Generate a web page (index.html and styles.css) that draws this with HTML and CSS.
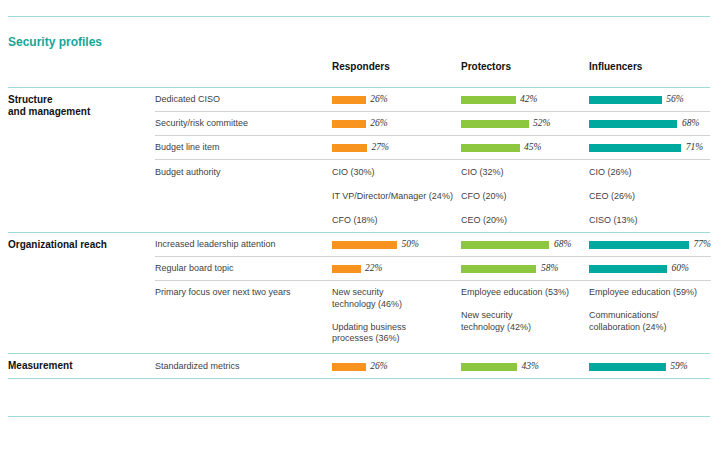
FILE: index.html
```html
<!DOCTYPE html>
<html lang="en">
<head>
<meta charset="utf-8">
<title>Security profiles</title>
<link rel="stylesheet" href="styles.css">
</head>
<body>
<div class="page">
  <div class="rule"></div>
  <h1 class="title">Security profiles</h1>
  <div class="head">
    <div></div>
    <div></div>
    <div>Responders</div>
    <div>Protectors</div>
    <div>Influencers</div>
  </div>

  <section class="section">
    <div class="cat">Structure<br>and management</div>
    <div class="rows">
      <div class="row">
        <div class="label">Dedicated CISO</div>
        <div class="barcell"><span class="bar orange" style="width:33.8px"></span><span class="pct">26%</span></div>
        <div class="barcell"><span class="bar green" style="width:54.6px"></span><span class="pct">42%</span></div>
        <div class="barcell"><span class="bar teal" style="width:72.8px"></span><span class="pct">56%</span></div>
      </div>
      <div class="row">
        <div class="label">Security/risk committee</div>
        <div class="barcell"><span class="bar orange" style="width:33.8px"></span><span class="pct">26%</span></div>
        <div class="barcell"><span class="bar green" style="width:67.6px"></span><span class="pct">52%</span></div>
        <div class="barcell"><span class="bar teal" style="width:88.4px"></span><span class="pct">68%</span></div>
      </div>
      <div class="row">
        <div class="label">Budget line item</div>
        <div class="barcell"><span class="bar orange" style="width:35.1px"></span><span class="pct">27%</span></div>
        <div class="barcell"><span class="bar green" style="width:58.5px"></span><span class="pct">45%</span></div>
        <div class="barcell"><span class="bar teal" style="width:92.3px"></span><span class="pct">71%</span></div>
      </div>
      <div class="row list">
        <div class="label">Budget authority</div>
        <div><div>CIO (30%)</div><div>IT VP/Director/Manager (24%)</div><div>CFO (18%)</div></div>
        <div><div>CIO (32%)</div><div>CFO (20%)</div><div>CEO (20%)</div></div>
        <div><div>CIO (26%)</div><div>CEO (26%)</div><div>CISO (13%)</div></div>
      </div>
    </div>
  </section>

  <section class="section">
    <div class="cat">Organizational reach</div>
    <div class="rows">
      <div class="row">
        <div class="label">Increased leadership attention</div>
        <div class="barcell"><span class="bar orange" style="width:65px"></span><span class="pct">50%</span></div>
        <div class="barcell"><span class="bar green" style="width:88.4px"></span><span class="pct">68%</span></div>
        <div class="barcell"><span class="bar teal" style="width:100.1px"></span><span class="pct">77%</span></div>
      </div>
      <div class="row">
        <div class="label">Regular board topic</div>
        <div class="barcell"><span class="bar orange" style="width:28.6px"></span><span class="pct">22%</span></div>
        <div class="barcell"><span class="bar green" style="width:75.4px"></span><span class="pct">58%</span></div>
        <div class="barcell"><span class="bar teal" style="width:78px"></span><span class="pct">60%</span></div>
      </div>
      <div class="row multi">
        <div class="label">Primary focus over next two years</div>
        <div>
          <div class="item">New security<br>technology (46%)</div>
          <div class="item">Updating business<br>processes (36%)</div>
        </div>
        <div>
          <div class="item">Employee education (53%)</div>
          <div class="item">New security<br>technology (42%)</div>
        </div>
        <div>
          <div class="item">Employee education (59%)</div>
          <div class="item">Communications/<br>collaboration (24%)</div>
        </div>
      </div>
    </div>
  </section>

  <section class="section last">
    <div class="cat">Measurement</div>
    <div class="rows">
      <div class="row tall">
        <div class="label">Standardized metrics</div>
        <div class="barcell"><span class="bar orange" style="width:33.8px"></span><span class="pct">26%</span></div>
        <div class="barcell"><span class="bar green" style="width:55.9px"></span><span class="pct">43%</span></div>
        <div class="barcell"><span class="bar teal" style="width:76.7px"></span><span class="pct">59%</span></div>
      </div>
    </div>
  </section>

  <div class="rule bottom"></div>
</div>
</body>
</html>
```

FILE: styles.css
```css
* {
  box-sizing: border-box;
  margin: 0;
  padding: 0;
}

body {
  background: #ffffff;
  font-family: "Liberation Sans", Arial, sans-serif;
  font-size: 9px;
  color: #3f3f3f;
}

.page {
  width: 702px;
  margin-left: 8px;
  padding-top: 16px;
}

.rule {
  border-top: 1px solid #9fdad8;
}

.rule.bottom {
  margin-top: 37px;
}

.title {
  margin-top: 18px;
  font-size: 12px;
  line-height: 14px;
  font-weight: bold;
  color: #17a597;
}

.head {
  display: grid;
  grid-template-columns: 147px 177px 129px 128px 1fr;
  margin-top: 11px;
  padding-bottom: 13px;
  font-size: 10px;
  line-height: 14px;
  font-weight: bold;
  color: #111111;
}

.section {
  display: grid;
  grid-template-columns: 147px 1fr;
  border-top: 1px solid #9fdad8;
}

.section.last {
  border-bottom: 1px solid #9fdad8;
}

.cat {
  padding-top: 6px;
  font-size: 10px;
  line-height: 12px;
  font-weight: bold;
  color: #111111;
}

.row {
  display: grid;
  grid-template-columns: 177px 129px 128px 1fr;
  line-height: 23px;
  border-top: 1px solid #d3d3d3;
}

.row:first-child {
  border-top: none;
}

.row.tall,
.row.list {
  line-height: 24px;
}

.row.multi {
  line-height: 11.5px;
  padding: 6px 0 8.5px;
}

.multi .item + .item {
  margin-top: 11.5px;
}

.barcell {
  display: flex;
  align-items: center;
}

.bar {
  display: block;
  flex: none;
  height: 8px;
  margin-top: 1px;
}

.bar.orange {
  background: #f7931e;
}

.bar.green {
  background: #8dc63f;
}

.bar.teal {
  background: #00a99d;
}

.pct {
  margin-left: 4.5px;
  font-family: "Liberation Serif", "Times New Roman", serif;
  font-style: italic;
  font-size: 9.5px;
  color: #333333;
}
```
